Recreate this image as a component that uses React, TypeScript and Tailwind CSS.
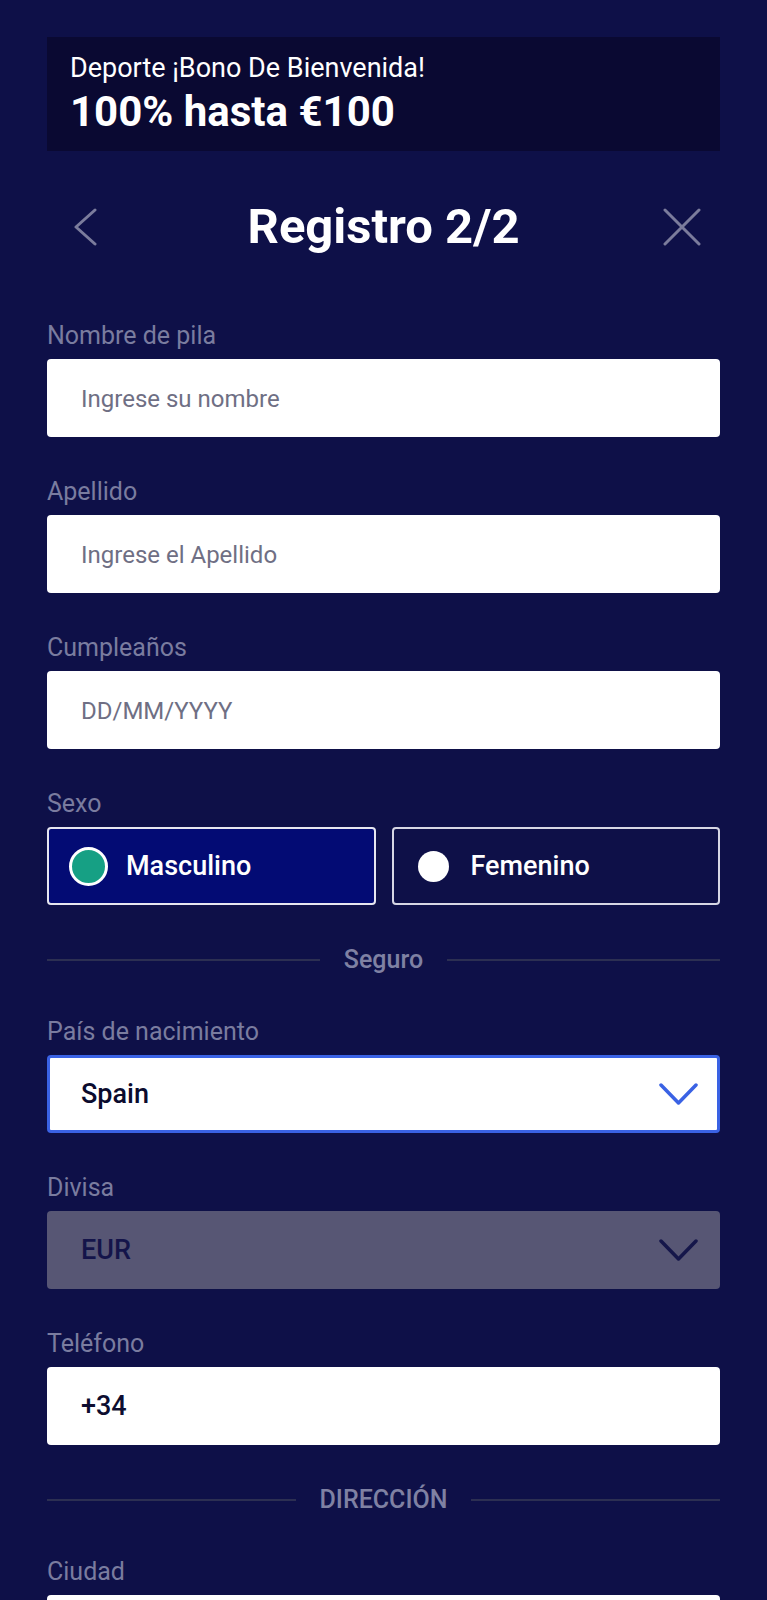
import { useState } from "react";

const font = { fontFamily: "Roboto, 'Noto Sans', Arial, sans-serif" };

function Label({ children }: { children: string }) {
  return <div className="text-[25px] leading-[28px] text-[#7a7c9f] mb-[9px]">{children}</div>;
}

function TextField({ label, placeholder, value }: { label: string; placeholder?: string; value?: string }) {
  return (
    <div>
      <Label>{label}</Label>
      <input
        defaultValue={value}
        placeholder={placeholder}
        className="w-full h-[78px] rounded-[4px] bg-white pl-[34px] pr-4 text-[27px] font-medium text-[#0d0d30] outline-none placeholder:text-[24px] placeholder:font-normal placeholder:text-[#6f6f84]"
      />
    </div>
  );
}

function Chevron({ color }: { color: string }) {
  return (
    <svg width="39" height="22" viewBox="0 0 39 22" fill="none">
      <polyline points="2,2 19.5,20 37,2" stroke={color} strokeWidth="3.5" strokeLinecap="round" strokeLinejoin="round" />
    </svg>
  );
}

function SelectField({ label, value, active }: { label: string; value: string; active?: boolean }) {
  return (
    <div>
      <Label>{label}</Label>
      <div
        className={
          active
            ? "flex h-[78px] items-center justify-between rounded-[4px] border-[3px] border-[#3a62e4] bg-white pl-[31px] pr-[19px]"
            : "flex h-[78px] items-center justify-between rounded-[4px] bg-[#575674] pl-[34px] pr-[22px]"
        }
      >
        <span className={active ? "text-[27px] font-medium text-[#0b0b2e]" : "text-[27px] font-medium text-[#14144a]"}>{value}</span>
        <Chevron color={active ? "#3a62e4" : "#15164a"} />
      </div>
    </div>
  );
}

function Divider({ text }: { text: string }) {
  return (
    <div className="flex h-[28px] items-center gap-[24px]">
      <div className="h-[2px] flex-1 bg-[#2c2f52]" />
      <span className="text-[25px] font-medium leading-[28px] text-[#7f81a3]">{text}</span>
      <div className="h-[2px] flex-1 bg-[#2c2f52]" />
    </div>
  );
}

export default function App() {
  const [sex, setSex] = useState<"m" | "f">("m");

  return (
    <div className="min-h-screen bg-[#0e1048] pl-[47px] pr-[47px] pt-[37px] pb-[80px]" style={font}>
      <div className="bg-[#0a0932] pl-[23px] pt-[15px] pb-[15px] text-white">
        <div className="text-[27px] leading-[32px]">Deporte ¡Bono De Bienvenida!</div>
        <div className="mt-[4px] text-[42px] font-bold leading-[48px]">100% hasta €100</div>
      </div>

      <div className="mt-[48px] grid h-[56px] grid-cols-[1fr_auto_1fr] items-center">
        <div className="flex justify-start pl-[27px]">
          <svg width="23" height="38" viewBox="0 0 23 38" fill="none">
            <polyline points="21,2 2,19 21,36" stroke="#7b7c9c" strokeWidth="3" strokeLinecap="round" strokeLinejoin="round" />
          </svg>
        </div>
        <h1 className="text-[49px] font-bold leading-[56px] text-white">Registro 2/2</h1>
        <div className="flex justify-end pr-[19px]">
          <svg width="38" height="38" viewBox="0 0 38 38" fill="none">
            <path d="M2 2L36 36M36 2L2 36" stroke="#7b7c9c" strokeWidth="3" strokeLinecap="round" />
          </svg>
        </div>
      </div>

      <div className="mt-[67px] flex flex-col gap-[41px]">
        <TextField label="Nombre de pila" placeholder="Ingrese su nombre" />
        <TextField label="Apellido" placeholder="Ingrese el Apellido" />
        <TextField label="Cumpleaños" placeholder="DD/MM/YYYY" />

        <div>
          <Label>Sexo</Label>
          <div className="grid grid-cols-2 gap-[16px]">
            {[
              { key: "m" as const, text: "Masculino" },
              { key: "f" as const, text: "Femenino" },
            ].map((o) => {
              const on = sex === o.key;
              return (
                <button
                  key={o.key}
                  onClick={() => setSex(o.key)}
                  className={
                    on
                      ? "flex h-[78px] items-center gap-[18px] rounded-[4px] border-2 border-[#e6e6f0] bg-[#030b74] pl-[20px] text-left"
                      : "flex h-[78px] items-center gap-[18px] rounded-[4px] border-2 border-[#d6d6e4] bg-[#0e1048] pl-[20px] text-left"
                  }
                >
                  <span className="flex h-[39px] w-[39px] items-center justify-center">
                    {on ? (
                      <span className="h-[39px] w-[39px] rounded-full border-[3px] border-white bg-[#16a084]" />
                    ) : (
                      <span className="h-[31px] w-[31px] rounded-full bg-white" />
                    )}
                  </span>
                  <span className="text-[27px] font-medium text-white">{o.text}</span>
                </button>
              );
            })}
          </div>
        </div>

        <div className="mb-[3px]">
          <Divider text="Seguro" />
        </div>

        <SelectField label="País de nacimiento" value="Spain" active />
        <SelectField label="Divisa" value="EUR" />
        <TextField label="Teléfono" value="+34" />

        <div className="mb-[3px]">
          <Divider text="DIRECCIÓN" />
        </div>

        <TextField label="Ciudad" placeholder="Ingrese su ciudad" />
        <TextField label="Dirección" placeholder="Ingrese su dirección" />
      </div>
    </div>
  );
}
